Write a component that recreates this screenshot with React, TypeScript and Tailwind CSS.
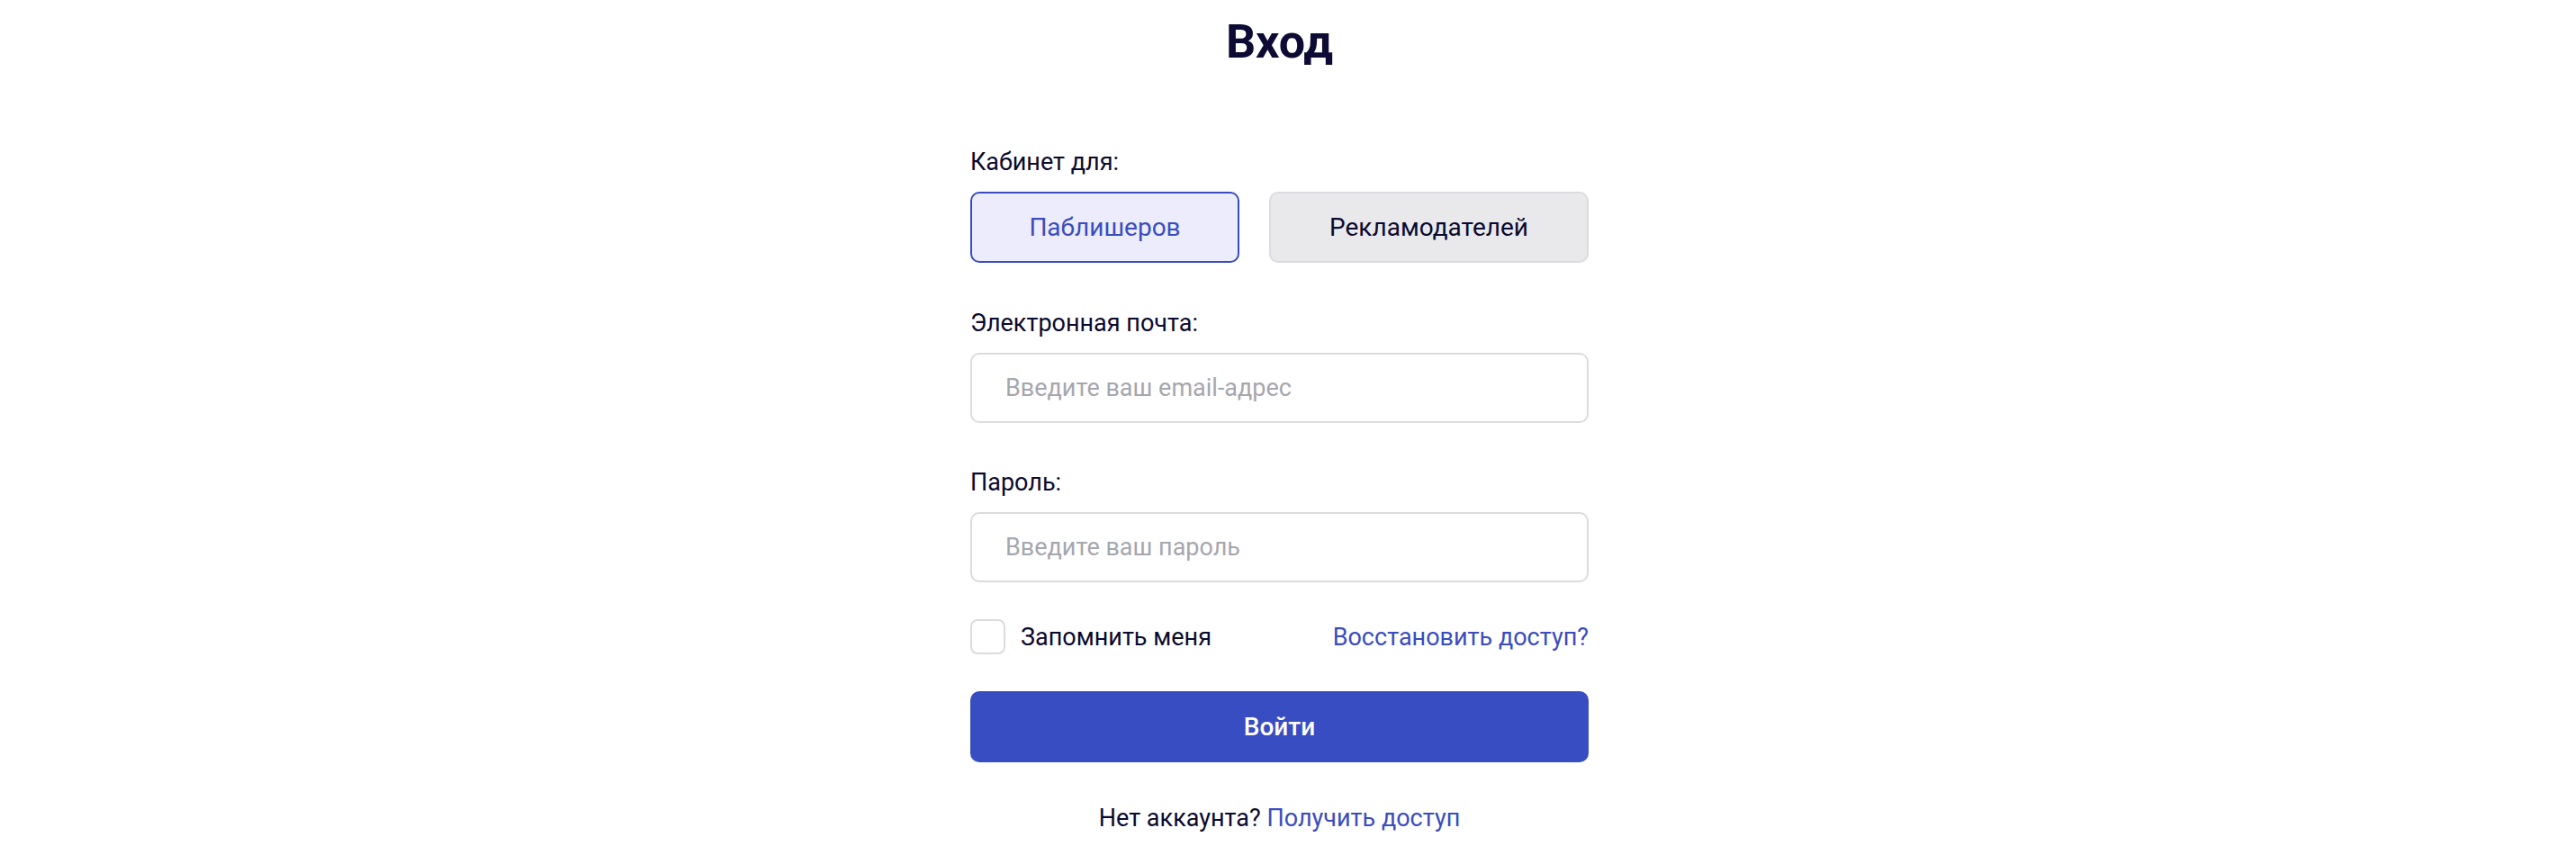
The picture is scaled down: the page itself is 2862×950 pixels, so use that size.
import { useState } from 'react'

const fontStack = { fontFamily: 'Roboto, "Noto Sans", sans-serif' }

const App = () => {
  const [cabinet, setCabinet] = useState<'publisher' | 'advertiser'>('publisher')
  const [remember, setRemember] = useState(false)

  return (
    <div className="min-h-[950px] bg-white flex justify-center pr-[19px]" style={fontStack}>
      <div className="w-[687px] flex flex-col">
        <h1 className="pt-[19px] text-center text-[52px] leading-[56px] font-bold text-[#0d0b33]">
          Вход
        </h1>

        <div className="mt-[89px] text-[27px] leading-[32px] text-[#0b0a2e]">Кабинет для:</div>
        <div className="mt-[17px] flex gap-[33px]">
          <button
            onClick={() => setCabinet('publisher')}
            className={
              cabinet === 'publisher'
                ? 'w-[299px] h-[79px] rounded-[10px] border-2 border-[#3a4cbe] bg-[#ececfc] text-[28px] text-[#3a4cbe]'
                : 'w-[299px] h-[79px] rounded-[10px] border-2 border-[#dcdce0] bg-[#e9e9ec] text-[28px] text-[#0b0a2e]'
            }
          >
            Паблишеров
          </button>
          <button
            onClick={() => setCabinet('advertiser')}
            className={
              cabinet === 'advertiser'
                ? 'w-[355px] h-[79px] rounded-[10px] border-2 border-[#3a4cbe] bg-[#ececfc] text-[28px] text-[#3a4cbe]'
                : 'w-[355px] h-[79px] rounded-[10px] border-2 border-[#dcdce0] bg-[#e9e9ec] text-[28px] text-[#0b0a2e]'
            }
          >
            Рекламодателей
          </button>
        </div>

        <label className="mt-[51px] text-[27px] leading-[32px] text-[#0b0a2e]">Электронная почта:</label>
        <input
          type="email"
          placeholder="Введите ваш email-адрес"
          className="mt-[17px] h-[78px] rounded-[10px] border-2 border-[#dcdce0] px-[37px] text-[27px] text-[#0b0a2e] placeholder:text-[#a6a6ae] outline-none"
        />

        <label className="mt-[50px] text-[27px] leading-[32px] text-[#0b0a2e]">Пароль:</label>
        <input
          type="password"
          placeholder="Введите ваш пароль"
          className="mt-[17px] h-[78px] rounded-[10px] border-2 border-[#dcdce0] px-[37px] text-[27px] text-[#0b0a2e] placeholder:text-[#a6a6ae] outline-none"
        />

        <div className="mt-[41px] flex items-center justify-between">
          <label className="flex items-center gap-[17px] cursor-pointer">
            <span
              onClick={() => setRemember(!remember)}
              className={
                remember
                  ? 'w-[39px] h-[39px] rounded-[8px] border-2 border-[#3a4cbe] bg-[#3a4cbe]'
                  : 'w-[39px] h-[39px] rounded-[8px] border-2 border-[#dcdce0] bg-white'
              }
            />
            <span className="text-[27px] leading-[32px] text-[#0b0a2e]">Запомнить меня</span>
          </label>
          <a href="#" className="text-[27px] leading-[32px] text-[#3a4cbe]">Восстановить доступ?</a>
        </div>

        <button className="mt-[41px] h-[79px] rounded-[10px] bg-[#394dc2] text-[28px] font-medium text-white">
          Войти
        </button>

        <div className="mt-[46px] text-center text-[27px] leading-[32px] text-[#0b0a2e]">
          Нет аккаунта? <a href="#" className="text-[#3a4cbe]">Получить доступ</a>
        </div>
      </div>
    </div>
  )
}

export default App
